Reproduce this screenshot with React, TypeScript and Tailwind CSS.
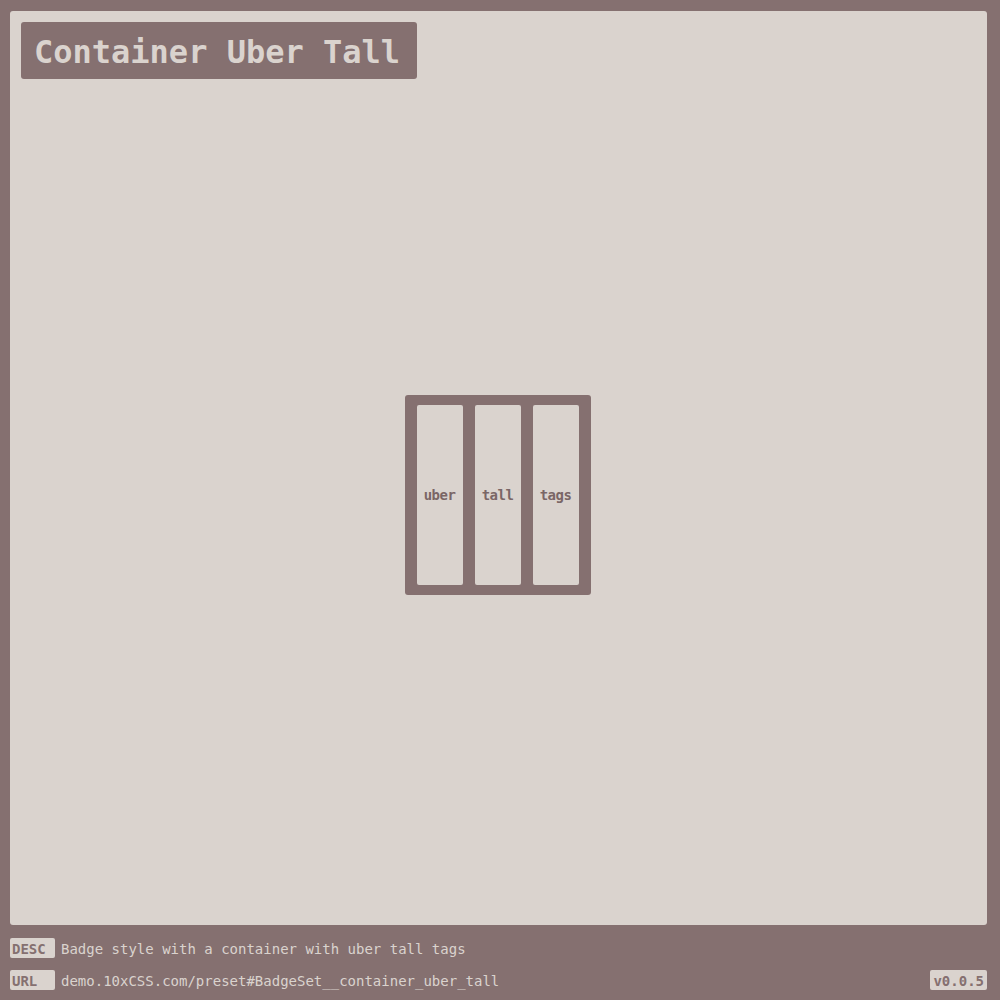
import React from "react";

const mono = { fontFamily: '"DejaVu Sans Mono", "Liberation Mono", monospace' };

export default function App() {
  return (
    <div className="w-[1000px] h-[1000px] bg-[#857070] flex flex-col" style={mono}>
      <div className="mt-[11px] ml-[10px] mr-[13px] h-[914px] bg-[#dad3ce] rounded-[3px] p-[11px] flex flex-col">
        <div className="self-start w-[396px] h-[57px] bg-[#857070] rounded-[3px] pl-[13px] pt-[2px] flex items-center">
          <span className="text-[32px] font-bold text-[#dad3ce] leading-none">Container Uber Tall</span>
        </div>
        <div className="flex-1 flex items-center justify-center pr-[2px] pb-[3px]">
          <div className="bg-[#857070] rounded-[3px] px-[12px] py-[10px] flex gap-[12px]">
            {["uber", "tall", "tags"].map((t) => (
              <div key={t} className="w-[46px] h-[180px] bg-[#dad3ce] rounded-[2px] flex items-center justify-center">
                <span className="text-[14px] font-bold text-[#7a6666] tracking-[-0.5px]">{t}</span>
              </div>
            ))}
          </div>
        </div>
      </div>
      <div className="flex flex-col gap-[12px] mt-[13px] px-[10px] pr-[13px]">
        <div className="flex items-center h-[20px]">
          <span className="w-[45px] h-[20px] bg-[#dad3ce] rounded-[2px] px-[2px] pt-[1px] text-[14px] font-bold text-[#857070] leading-[20px]">DESC</span>
          <span className="ml-[6px] pt-[2px] text-[14px] text-[#dad3ce] leading-[20px]">Badge style with a container with uber tall tags</span>
        </div>
        <div className="flex items-center h-[20px]">
          <span className="w-[45px] h-[20px] bg-[#dad3ce] rounded-[2px] px-[2px] pt-[1px] text-[14px] font-bold text-[#857070] leading-[20px]">URL</span>
          <span className="ml-[6px] pt-[2px] text-[14px] text-[#dad3ce] leading-[20px]">demo.10xCSS.com/preset#BadgeSet__container_uber_tall</span>
          <span className="ml-auto h-[20px] bg-[#dad3ce] rounded-[2px] px-[3px] pt-[1px] text-[14px] font-bold text-[#857070] leading-[20px]">v0.0.5</span>
        </div>
      </div>
    </div>
  );
}
